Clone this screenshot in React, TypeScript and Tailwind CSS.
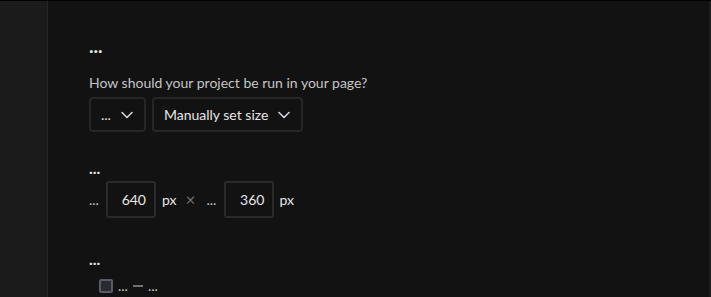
import { FC } from 'react';

const Chevron: FC = () => (
  <svg width="14" height="14" viewBox="0 0 14 14" fill="none" className="text-gray-300">
    <path d="M2 4.5 L7 9.5 L12 4.5" stroke="currentColor" strokeWidth="1.6" strokeLinecap="round" strokeLinejoin="round" />
  </svg>
);

const SizeInput: FC<{ value: string }> = ({ value }) => (
  <div className="flex items-center justify-end w-[50px] h-[37px] border-2 border-[#2a2a2a] rounded-[3px] px-2 text-[#e6e6e6]">
    {value}
  </div>
);

const App: FC = () => {
  return (
    <div
      className="w-[711px] h-[297px] bg-black pt-px flex text-[14px] text-[#c5c5c5] overflow-hidden"
      style={{ fontFamily: 'Lato, "Noto Sans", sans-serif' }}
    >
      <div className="w-[48px] bg-[#1b1b1b] border-r border-[#262626]" />
      <div className="flex-1 bg-[#121212] border-r-2 border-[#1c1c1c] pl-[41px] pt-[33px]">
        <div className="font-bold text-[19px] text-[#e6e6e6] leading-6">...</div>

        <div className="mt-[15px] leading-5">How should your project be run in your page?</div>
        <div className="flex gap-[6px] mt-[4px]">
          <div className="flex items-center gap-[9px] h-[35px] px-[10px] border-2 border-[#262626] rounded-[4px] text-[#e6e6e6]">
            <span>...</span>
            <Chevron />
          </div>
          <div className="flex items-center gap-[9px] h-[35px] px-[10px] border-2 border-[#262626] rounded-[4px] text-[#e6e6e6]">
            <span>Manually set size</span>
            <Chevron />
          </div>
        </div>

        <div className="mt-[26px] font-bold text-[16px] text-[#e6e6e6] leading-5">...</div>
        <div className="flex items-center mt-[3px] text-[#e6e6e6]">
          <span className="w-[17px] text-[#c5c5c5]">...</span>
          <SizeInput value="640" />
          <span className="ml-[6px]">px</span>
          <span className="ml-[9px] text-[17px] text-[#6f6f6f]">×</span>
          <span className="ml-[11px] w-[18px] text-[#c5c5c5]">...</span>
          <SizeInput value="360" />
          <span className="ml-[5px]">px</span>
        </div>

        <div className="mt-[31px] font-bold text-[16px] text-[#e6e6e6] leading-5">...</div>
        <div className="flex items-center mt-[9px] ml-[10px] gap-[5px] text-[#c5c5c5] leading-4">
          <div className="w-[14px] h-[14px] border-2 border-[#5a5a66] bg-[#2a2a33] rounded-[2px]" />
          <span>...</span>
          <span className="w-[10px] h-[2px] bg-[#707070]" />
          <span>...</span>
        </div>
      </div>
    </div>
  );
};

export default App;
